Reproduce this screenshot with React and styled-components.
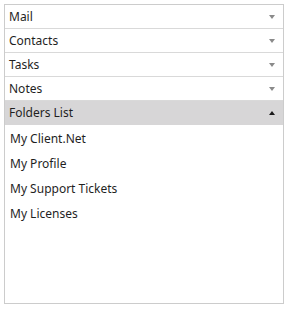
import React from 'react'
import styled, { createGlobalStyle } from 'styled-components'

const Global = createGlobalStyle`
    body {
        margin: 4px;
        background: #ffffff;
        font-family: "Segoe UI", "Noto Sans", "Open Sans", sans-serif;
    }
`

const Panel = styled.div`
    width: 278px;
    height: 298px;
    border: 1px solid #cccccc;
    background: #ffffff;
    display: flex;
    flex-direction: column;
`

const Header = styled.div`
    height: 23px;
    display: flex;
    align-items: center;
    justify-content: space-between;
    padding: 0 8px 0 4px;
    font-size: 12px;
    color: #1f1f1f;
    background: ${props => props.open ? '#d7d6d7' : '#ffffff'};
    border-bottom: 1px solid ${props => props.open ? '#d7d6d7' : '#d9d9d9'};
`

const Arrow = styled.span`
    width: 0;
    height: 0;
    border-left: 3px solid transparent;
    border-right: 3px solid transparent;
    ${props => props.open
        ? 'border-bottom: 4px solid #1a1a1a;'
        : 'border-top: 4px solid #8a8a8a;'}
`

const List = styled.div`
    display: flex;
    flex-direction: column;
    padding-top: 1px;
`

const Item = styled.div`
    height: 25px;
    display: flex;
    align-items: center;
    padding-left: 5px;
    font-size: 12px;
    color: #1f1f1f;
`

const groups = ['Mail', 'Contacts', 'Tasks', 'Notes']
const folders = ['My Client.Net', 'My Profile', 'My Support Tickets', 'My Licenses']

export default function App() {
    return (
        <>
            <Global />
            <Panel>
                {groups.map((g) => (
                    <Header key={g}>
                        {g}
                        <Arrow />
                    </Header>
                ))}
                <Header open>
                    Folders List
                    <Arrow open />
                </Header>
                <List>
                    {folders.map((f) => <Item key={f}>{f}</Item>)}
                </List>
            </Panel>
        </>
    )
}
